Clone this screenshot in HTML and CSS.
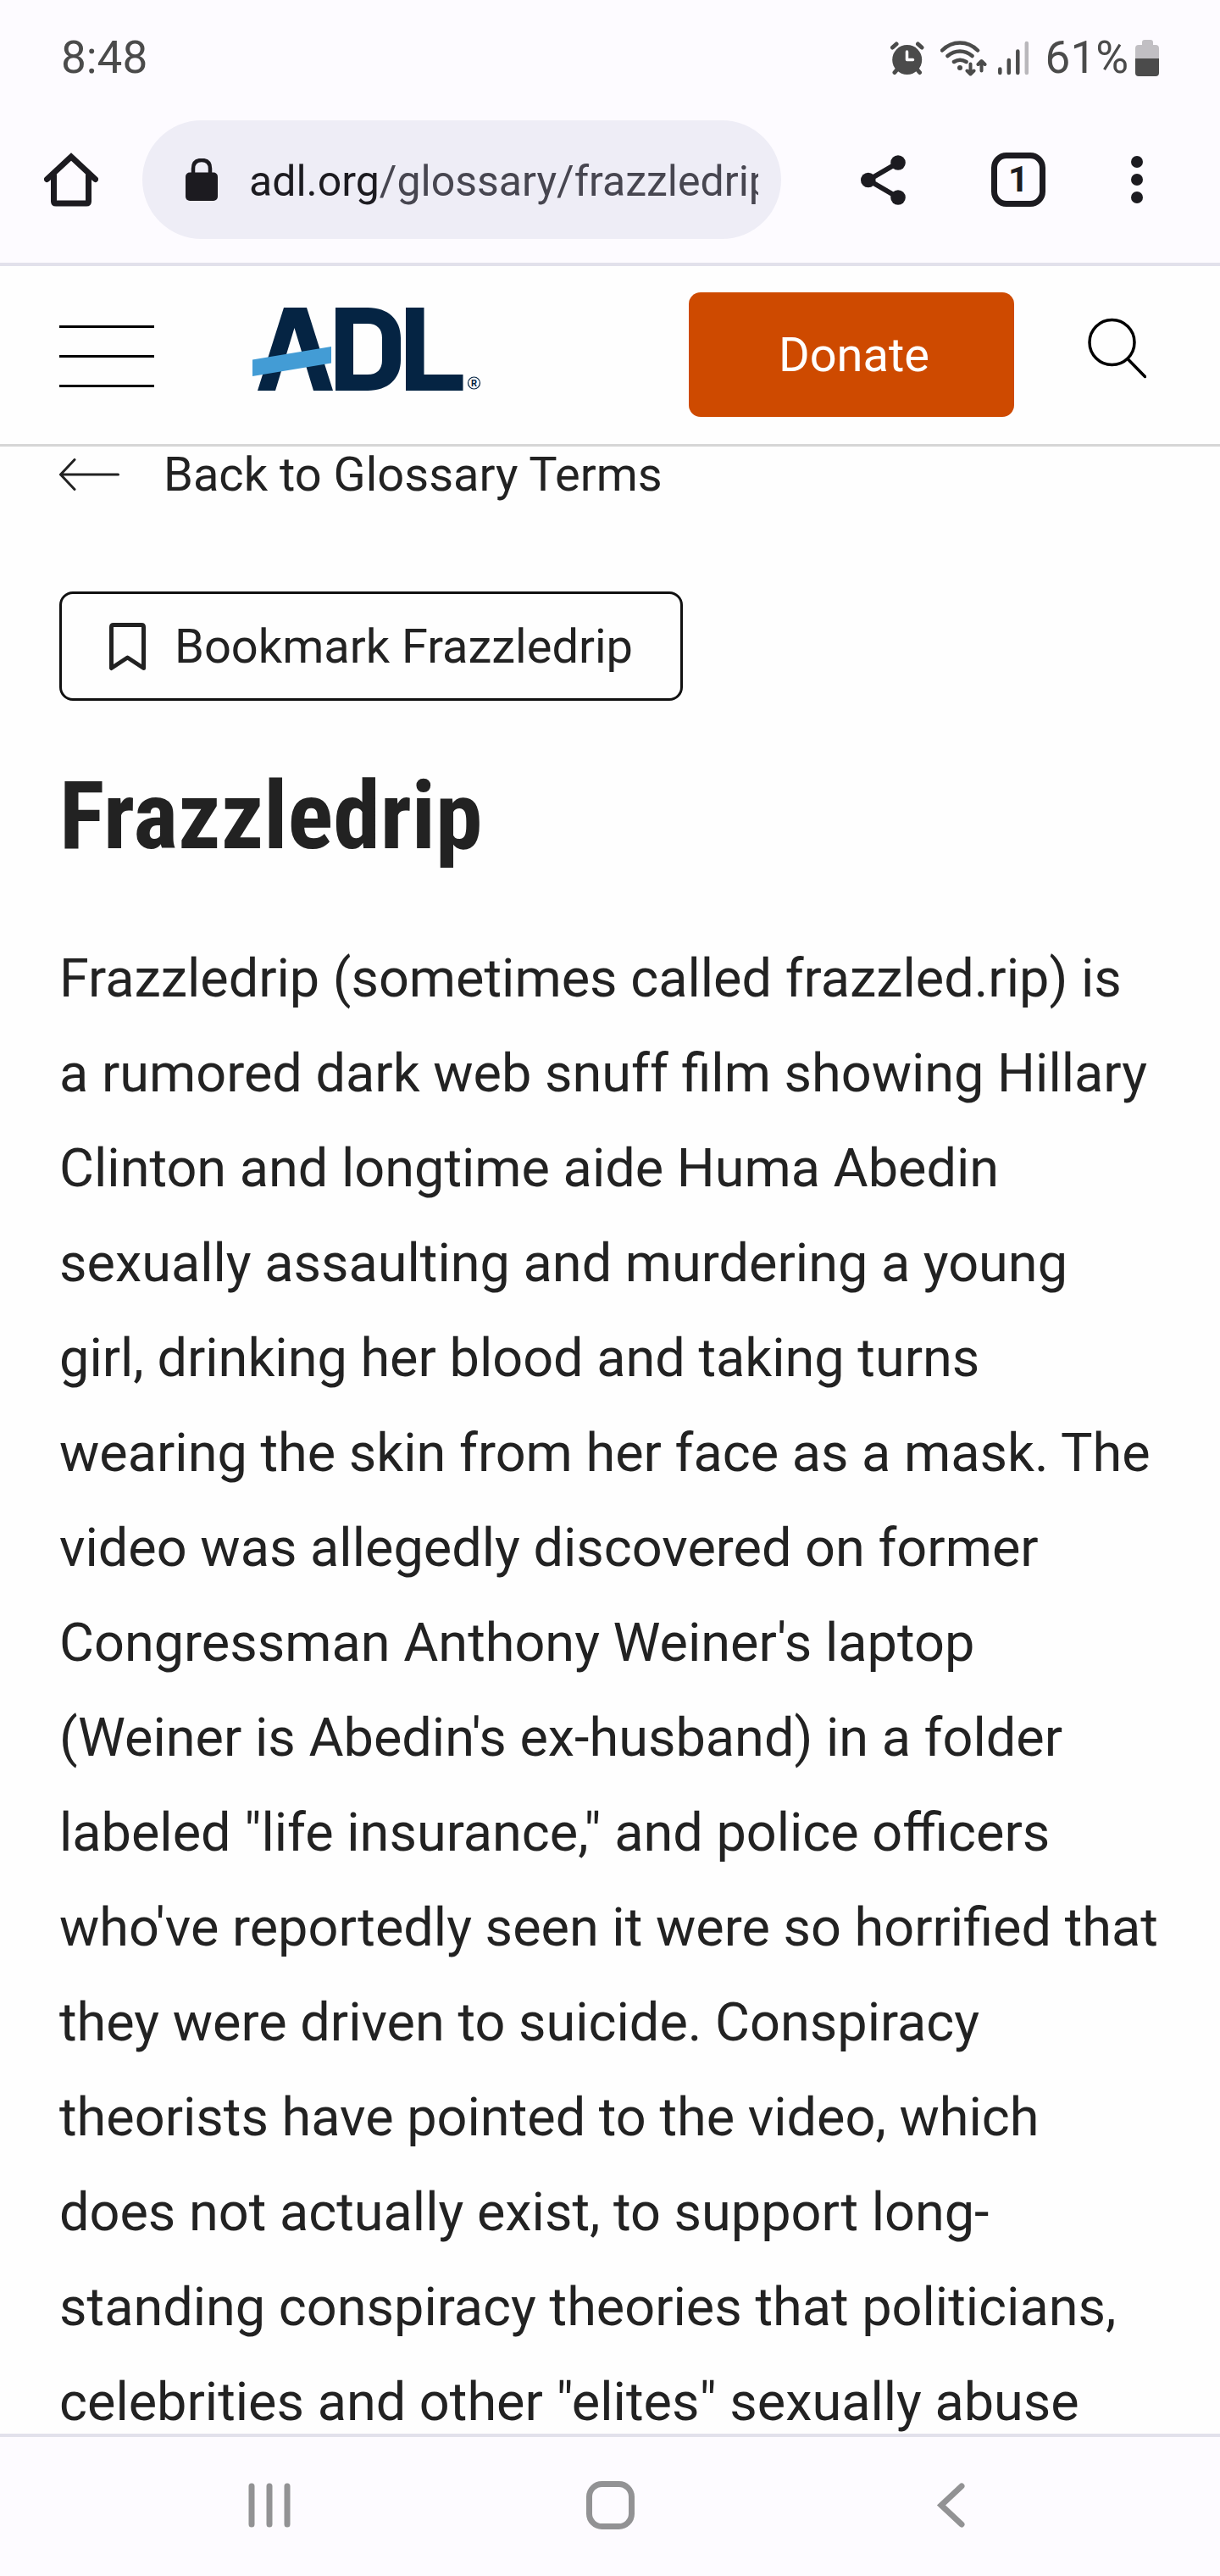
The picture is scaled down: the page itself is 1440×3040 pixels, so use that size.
FILE: index.html
```html
<!DOCTYPE html>
<html lang="en">
<head>
<meta charset="utf-8">
<meta name="viewport" content="width=device-width, initial-scale=1">
<title>Frazzledrip | ADL</title>
<link rel="stylesheet" href="styles.css">
</head>
<body class="screen">
  <div class="status">
    <span class="status-time">8:48</span>
    <div class="status-icons">
      <svg width="51" height="44" viewBox="1050 46 51 44" fill="none" stroke="#4b4b4b" stroke-width="5" stroke-linecap="round" stroke-linejoin="round" aria-hidden="true">
        <circle cx="1069.7" cy="70.5" r="17.5" fill="#4b4b4b" stroke="none"/>
        <path d="M1052.5 56l4.500-4M1082.500 52l4.500 4M1055 85.500l5-6M1084.500 85.500l-5-6"/>
        <path d="M1069.500 61v9.500h7" stroke="#fdfbff" stroke-width="3.500"/>
      </svg>
      <svg width="60" height="44" viewBox="1109 46 60 44" fill="none" stroke="#4b4b4b" stroke-width="4.500" stroke-linecap="round" stroke-linejoin="round" aria-hidden="true">
        <path d="M1111 59.500Q1120 50.500 1132 50.500T1153 59.500M1117.500 66Q1124 60.500 1132 60.500T1146.500 66M1125 73Q1132 68.500 1139.500 73"/>
        <circle cx="1132" cy="80" r="3" fill="#4b4b4b" stroke="none"/>
        <path stroke-width="4" d="M1144.500 75.500v11.500M1140.500 83.500l4 4 4-4M1157.500 83.500v-11M1153.500 76l4-4 4 4"/>
      </svg>
      <svg width="48" height="44" viewBox="1177 46 48 44" fill="none" stroke="#4b4b4b" stroke-width="4.500" stroke-linecap="round" aria-hidden="true">
        <path d="M1179.300 81.500v4.500M1189.800 71v15M1200.300 60.500v25.500"/>
        <path d="M1210.800 51v35" stroke="#b9b7bb"/>
      </svg>
      <span>61%</span>
      <svg width="28" height="44" viewBox="1340 46 28 44" aria-hidden="true">
        <path fill="#c1bfc3" d="M1340 69V57q0-4 4-4h4v-3q0-3 3-3h7q3 0 3 3v3h3q4 0 4 4v12z"/>
        <path fill="#4b4b4b" d="M1340 69h28v17q0 4-4 4h-20q-4 0-4-4z"/>
      </svg>
    </div>
  </div>

  <div class="toolbar">
    <button class="icon-button" type="button" aria-label="Home">
      <svg width="64" height="64" viewBox="0 0 64 64" fill="none" stroke="#1c1b20" stroke-width="7" stroke-linecap="round" stroke-linejoin="miter" aria-hidden="true">
        <path d="M3.500 31.500L32 5l28.500 26.500"/><path d="M11.500 27v30.500q0 2.500 2.500 2.500h36q2.500 0 2.500-2.500V27"/>
      </svg>
    </button>
    <button class="address" type="button" aria-label="Address">
      <svg class="lock" width="38" height="50" viewBox="0 0 38 50" aria-hidden="true">
        <rect y="16.500" width="38" height="33.500" rx="5" fill="#1c1b20"/>
        <path d="M9 18v-6q0-10 10-10t10 10v6" fill="none" stroke="#1c1b20" stroke-width="4.500"/>
      </svg>
      <span class="url">adl.org<span class="url-path">/glossary/frazzledrip</span></span>
    </button>
    <div class="actions">
      <button class="icon-button" type="button" aria-label="Share">
        <svg width="53" height="60" viewBox="0 0 53 60" fill="#1c1b20" aria-hidden="true">
          <path d="M44 10L9 30.500 44 51" fill="none" stroke="#1c1b20" stroke-width="6"/>
          <circle cx="44" cy="10" r="8.800"/><circle cx="8.800" cy="30.500" r="8.800"/><circle cx="44" cy="51" r="8.800"/>
        </svg>
      </button>
      <button class="tabs" type="button" aria-label="Open tabs">1</button>
      <button class="icon-button" type="button" aria-label="More options">
        <svg width="14" height="60" viewBox="0 0 14 60" fill="#1c1b20" aria-hidden="true">
          <circle cx="7" cy="9" r="7"/><circle cx="7" cy="30" r="7"/><circle cx="7" cy="51" r="7"/>
        </svg>
      </button>
    </div>
  </div>

  <header class="site-header">
    <button class="icon-button" type="button" aria-label="Menu">
      <svg width="112" height="147" viewBox="0 0 112 147" aria-hidden="true">
        <path d="M0 39h112v3H0zM0 74h112v3H0zM0 109h112v3H0z"/>
      </svg>
    </button>
    <a class="logo" href="#" aria-label="ADL">
      <svg width="270" height="147" viewBox="298 345 270 147" fill="#052443" aria-hidden="true">
        <path d="M335 363h27l31 98h-23L347.500 387 325 461h-21z"/>
        <path fill-rule="evenodd" d="M396 363h38c24 0 39 14 39 36v26c0 22-15 36-39 36h-38zM417 382v60h17c11 0 17-6 17-17v-26c0-11-6-17-17-17z"/>
        <path d="M479 363h21.500v79h46v19H479z"/>
        <path fill="#439cd5" d="M298 424.500l93-15.500v19.500L298 444z"/>
        <circle cx="559.500" cy="452" r="7" fill="none" stroke="#052443" stroke-width="1.200"/>
        <text class="reg" x="559.500" y="456" text-anchor="middle">R</text>
      </svg>
    </a>
    <a class="donate" href="#">Donate</a>
    <button class="icon-button" type="button" aria-label="Search">
      <svg width="69" height="147" viewBox="1284 345 69 147" fill="none" stroke="#000" stroke-width="3.500" stroke-linecap="round" aria-hidden="true">
        <circle cx="1312.500" cy="404" r="26.500"/><path d="M1331.500 424l20 20.500"/>
      </svg>
    </button>
  </header>

  <main class="content">
    <a class="back" href="#">
      <svg width="71" height="38" viewBox="0 0 71 38" fill="none" stroke="#222" stroke-width="3" stroke-linecap="round" stroke-linejoin="round" aria-hidden="true">
        <path d="M69.500 19H1.500M18 1.500L1.500 19 18 36.500"/>
      </svg>
      Back to Glossary Terms
    </a>
    <button class="bookmark" type="button">
      <svg width="43" height="58" viewBox="0 0 43 58" fill="none" stroke="#222" stroke-width="5" stroke-linejoin="round" aria-hidden="true">
        <path d="M2.500 54.500V6q0-2.500 2.500-2.500h33q2.500 0 2.500 2.500v48.500l-19-12.500z"/>
      </svg>
      Bookmark Frazzledrip
    </button>
    <h1 class="title">Frazzledrip</h1>
    <p class="definition">Frazzledrip (sometimes called frazzled.rip) is a rumored dark web snuff film showing Hillary Clinton and longtime aide Huma Abedin sexually assaulting and murdering a young girl, drinking her blood and taking turns wearing the skin from her face as a mask. The video was allegedly discovered on former Congressman Anthony Weiner's laptop (Weiner is Abedin's ex-husband) in a folder labeled "life insurance," and police officers who've reportedly seen it were so horrified that they were driven to suicide. Conspiracy theorists have pointed to the video, which does not actually exist, to support long-standing conspiracy theories that politicians, celebrities and other "elites" sexually abuse</p>
  </main>

  <nav class="system-nav" aria-label="System">
    <button class="icon-button" type="button" aria-label="Recent apps">
      <svg width="57" height="57" viewBox="0 0 57 57" stroke="#929294" stroke-width="7" stroke-linecap="round" aria-hidden="true">
        <path d="M9 6v45M30 6v45M51 6v45"/>
      </svg>
    </button>
    <button class="icon-button" type="button" aria-label="Home screen">
      <svg width="57" height="57" viewBox="0 0 57 57" fill="none" stroke="#929294" stroke-width="7" aria-hidden="true">
        <rect x="3.500" y="3.500" width="50" height="50" rx="15"/>
      </svg>
    </button>
    <button class="icon-button" type="button" aria-label="Back">
      <svg width="57" height="57" viewBox="0 0 57 57" fill="none" stroke="#929294" stroke-width="7" stroke-linecap="round" aria-hidden="true">
        <path d="M40 6L16 28.500 40 51"/>
      </svg>
    </button>
  </nav>
</body>
</html>
```
FILE: styles.css
```css
* {
  box-sizing: border-box;
}

.screen {
  display: flex;
  flex-direction: column;
  height: 100vh;
  margin: 0;
  background: #fefefe;
  color: #222;
  font-family: Roboto, "Liberation Sans", sans-serif;
  font-size: 56px;
  line-height: 64px;
}

svg {
  display: block;
  flex: none;
}

.icon-button {
  flex: none;
  padding: 0;
  border: 0;
  background: none;
}

.status {
  display: flex;
  flex: none;
  justify-content: space-between;
  align-items: center;
  height: 136px;
  padding: 0 72px;
  background: #fdfbff;
  color: #4b4b4b;
  font-size: 53px;
}

.status-icons {
  display: flex;
  align-items: center;
  gap: 8px;
}

.toolbar {
  display: flex;
  flex: none;
  align-items: center;
  gap: 52px;
  padding: 6px 91px 28px 52px;
  border-bottom: 4px solid #e2e1eb;
  background: #fdfbff;
}

.address {
  display: flex;
  flex: 1;
  align-items: center;
  gap: 37px;
  min-width: 0;
  height: 140px;
  padding: 0 27px 0 51px;
  border: 0;
  border-radius: 70px;
  background: #eeedf6;
  color: #1c1b20;
  font-family: inherit;
  font-size: 50px;
  line-height: 64px;
  text-align: left;
}

.url {
  flex: 1;
  padding-top: 4px;
  overflow: hidden;
  white-space: nowrap;
}

.url-path {
  color: #474650;
}

.actions {
  display: flex;
  align-items: center;
  gap: 101px;
  margin-left: 42px;
}

.tabs {
  width: 64px;
  height: 64px;
  padding: 0;
  border: 7px solid #1c1b20;
  border-radius: 18px;
  background: none;
  color: #1c1b20;
  font-family: inherit;
  font-size: 42px;
  font-weight: 700;
  line-height: 50px;
}

.site-header {
  display: flex;
  flex: none;
  align-items: center;
  padding: 31px 87px 32px 70px;
  border-bottom: 3px solid #d6d6d6;
  background: #fefefe;
}

.logo {
  margin-left: 116px;
}

.reg {
  font-size: 11px;
  font-weight: 700;
}

.donate {
  margin: 0 87px 0 auto;
  padding: 42px 100px 41px 106px;
  border-radius: 14px;
  background: #ce4a00;
  color: #fff;
  text-decoration: none;
}

.content {
  flex: 1;
  min-height: 0;
  padding: 1px 70px 0;
  overflow-y: auto;
  scrollbar-width: none;
}

.back {
  display: flex;
  align-items: center;
  gap: 52px;
  color: #222;
  text-decoration: none;
}

.bookmark {
  display: flex;
  align-items: center;
  gap: 34px;
  margin-top: 106px;
  padding: 30px 56px 29px;
  border: 3px solid #111;
  border-radius: 16px;
  background: none;
  color: #222;
  font: inherit;
}

.title {
  margin: 72px 0;
  font-family: "Roboto Condensed", "Liberation Sans Narrow", Roboto, sans-serif;
  font-size: 112px;
  font-weight: 700;
  line-height: 128px;
}

.definition {
  margin: 0;
  font-size: 63px;
  line-height: 112px;
}

.system-nav {
  display: grid;
  flex: none;
  grid-template-columns: repeat(3, 28%);
  justify-content: center;
  justify-items: center;
  align-items: center;
  height: 168px;
  padding-bottom: 4px;
  border-top: 4px solid #e2e1eb;
  background: #fdfbff;
}
```
